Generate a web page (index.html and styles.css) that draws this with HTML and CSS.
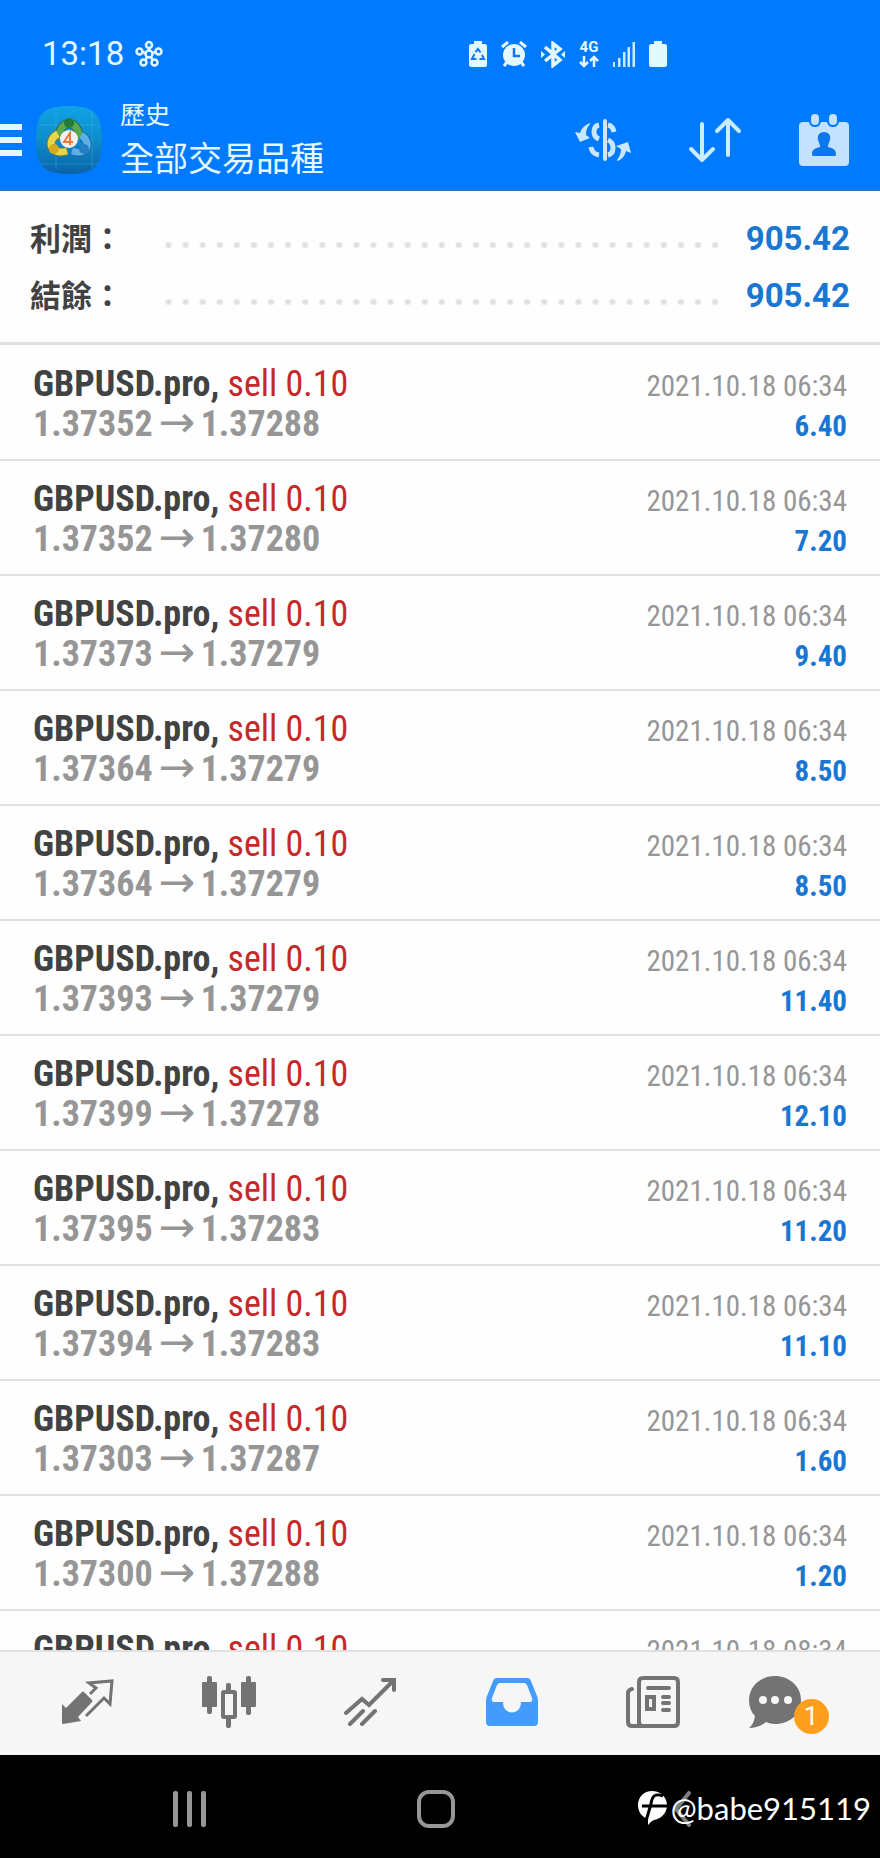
FILE: index.html
```html
<!DOCTYPE html>
<html lang="zh-Hant">
<head>
<meta charset="utf-8">
<meta name="viewport" content="width=device-width, initial-scale=1">
<title>歷史</title>
<link rel="stylesheet" href="styles.css">
</head>
<body>
<div class="app">
  <header class="header">
    <div class="status">
      <div class="status-left">
        <span class="clock">13:18</span>
        <svg class="icon" width="28" height="28" viewBox="0 0 28 28" fill="none" stroke="#e4f8ff" stroke-width="2.500"><circle cx="14" cy="14" r="3.5"/><circle cx="14" cy="5" r="3"/><circle cx="4.500" cy="11.500" r="3"/><circle cx="23.500" cy="11.500" r="3"/><circle cx="8.500" cy="22.500" r="3"/><circle cx="19.500" cy="22.500" r="3"/><path d="M14 8v3M7.500 12l3 1M20.500 12l-3 1M10.500 20l1.500-3M17.500 20L16 17"/></svg>
      </div>
      <div class="status-right">
        <svg class="icon" width="18" height="26" viewBox="0 0 18 26"><path fill="#e4f8ff" d="M5 0h8v3h3q2 0 2 2v19q0 2-2 2H2q-2 0-2-2V5q0-2 2-2h3z"/><path fill="none" stroke="#1478ee" stroke-width="2" d="M6.500 11L9 8l2.500 3.500M13 14l2 4h-4.500M7.500 18H3l2.500-5"/></svg>
        <svg class="icon" width="26" height="26" viewBox="0 0 26 26"><circle cx="13" cy="14" r="11" fill="#e4f8ff"/><path fill="none" stroke="#e4f8ff" stroke-width="3" d="M1 6l6-5M19 1l6 5M6 21l-3 4M20 21l3 4"/><path fill="none" stroke="#1478ee" stroke-width="2.500" d="M13 7v8h6"/></svg>
        <svg class="icon" width="24" height="27" viewBox="0 0 24 27"><path fill="none" stroke="#e4f8ff" stroke-width="3.500" d="M4 6l15 13-7 5.500v-22L19 8 4 20"/><path fill="#e4f8ff" d="M0 10l4 3.500L0 17zM24 10l-4 3.500 4 3.500z"/></svg>
        <span class="network">4G<svg class="icon" width="20" height="13" viewBox="0 0 20 13" fill="none" stroke="#e4f8ff" stroke-width="2.500"><path d="M5 1v10M1 7l4 4 4-4M15 12V2M11 6l4-4 4 4"/></svg></span>
        <svg class="icon" width="22" height="25" viewBox="0 0 22 25" fill="#c9ecff"><path d="M0 20h2v5H0zM5 16h2.500v9H5zM10 10h2.500v15H10zM14.500 5H17v20h-2.500zM19.500 0H22v25h-2.500z"/></svg>
        <svg class="icon" width="18" height="26" viewBox="0 0 18 26"><path fill="#e4f8ff" d="M5 0h8v3h3q2 0 2 2v19q0 2-2 2H2q-2 0-2-2V5q0-2 2-2h3z"/></svg>
      </div>
    </div>
    <div class="toolbar">
      <button class="plain" aria-label="選單"><svg class="icon" width="22" height="34" viewBox="0 0 22 34" fill="#e4f8ff"><path d="M0 1h22v6H0zM0 14h22v6H0zM0 27h22v6H0z"/></svg></button>
      <svg class="icon logo" width="66" height="68" viewBox="0 0 66 68">
        <defs>
          <linearGradient id="bg" x2="0" y2="1"><stop offset="0" stop-color="#10a3e6"/><stop offset=".5" stop-color="#0d8ccb"/><stop offset="1" stop-color="#0b62a8"/></linearGradient>
        </defs>
        <path fill="url(#bg)" d="M33 0C59 0 66 8 66 34S59 68 33 68 0 60 0 34 7 0 33 0z"/>
        <path fill="none" stroke="#55bde3" stroke-opacity=".35" d="M4 19h58M4 58h58M56 6v56M20 8v54"/>
        <path fill="none" stroke="#2d6d45" stroke-width="9" d="M23 34C22 12 44 12 43 34"/>
        <path fill="none" stroke="#5aa850" stroke-width="7" d="M23 34C22 12 44 12 43 34"/>
        <path fill="none" stroke="#6e7a3a" stroke-width="9" d="M22 28C10 34 14 50 31 45"/>
        <path fill="none" stroke="#e8d548" stroke-width="7" d="M22 28C10 34 14 50 31 45"/>
        <path fill="none" stroke="#20659f" stroke-width="9" d="M45 29C56 36 52 50 36 45"/>
        <path fill="none" stroke="#5cb0e6" stroke-width="7" d="M45 29C56 36 52 50 36 45"/>
        <circle cx="33" cy="17" r="5" fill="#237d38"/><circle cx="18" cy="43" r="5" fill="#d5a91f"/><circle cx="48" cy="43" r="5" fill="#2380c6"/>
        <circle cx="33" cy="33" r="9" fill="#f5f1ef"/>
        <path fill="none" stroke="#e77b3b" stroke-width="2" d="M34 39V27l-6 9h9"/>
      </svg>
      <div class="titles"><div class="subtitle">歷史</div><h1 class="title">全部交易品種</h1></div>
      <div class="actions">
        <button class="plain" aria-label="交易品種"><svg class="icon" width="56" height="44" viewBox="0 0 56 44" fill="none" stroke="#c9e8ff" stroke-width="5"><path stroke-width="4" stroke-linecap="round" d="M30 3v38"/><path d="M24 7q-5 1-5 7 0 5 5 7M33 7q5 1 6 7M16 29q1 7 8 8M33 22q5 2 5 8t-5 7"/><path fill="#c9e8ff" stroke="none" d="M15 5Q7 8 5 15l-5-1 5 10 10-4-4-3Q11 10 15 6zM42 43q7-2 9-10l5 2-3-11-12 4 5 3q0 6-4 11z"/></svg></button>
        <button class="plain" aria-label="排序"><svg class="icon" width="54" height="46" viewBox="0 0 54 46" fill="none" stroke="#c9ecff" stroke-width="4" stroke-linecap="round" stroke-linejoin="round"><path d="M14 7v36M3 32l11 11 11-11M40 38V3M29 14L40 3l11 11"/></svg></button>
        <button class="plain" aria-label="期間"><svg class="icon" width="50" height="52" viewBox="0 0 50 52"><path fill="#c4e1ff" d="M4 8h6q1 5 6 5t6-5h6q1 5 6 5t6-5h6q4 0 4 4v36q0 4-4 4H4q-4 0-4-4V12q0-4 4-4z"/><rect x="12" y="0" width="8" height="11" rx="4" fill="#c4e1ff"/><rect x="30" y="0" width="8" height="11" rx="4" fill="#c4e1ff"/><path fill="#0b78ea" d="M25 18c5 0 7 4 6 8-1 3-2 4-2 7 5 1 8 3 8 7 0 2-1 2-2 2H15c-1 0-2 0-2-2 0-4 3-6 8-7 0-3-1-4-2-7-1-4 1-8 6-8z"/></svg></button>
      </div>
    </div>
  </header>

  <dl class="summary">
    <div class="total"><dt>利潤：</dt><dd class="dots" aria-hidden="true"></dd><dd class="amount">905.42</dd></div>
    <div class="total"><dt>結餘：</dt><dd class="dots" aria-hidden="true"></dd><dd class="amount">905.42</dd></div>
  </dl>

  <main class="list-wrap">
    <ul class="deals">
      <li class="deal"><div class="name"><b>GBPUSD.pro,</b> sell 0.10</div><time class="date">2021.10.18 06:34</time><div class="prices">1.37352<span class="arrow">→</span>1.37288</div><div class="profit">6.40</div></li>
      <li class="deal"><div class="name"><b>GBPUSD.pro,</b> sell 0.10</div><time class="date">2021.10.18 06:34</time><div class="prices">1.37352<span class="arrow">→</span>1.37280</div><div class="profit">7.20</div></li>
      <li class="deal"><div class="name"><b>GBPUSD.pro,</b> sell 0.10</div><time class="date">2021.10.18 06:34</time><div class="prices">1.37373<span class="arrow">→</span>1.37279</div><div class="profit">9.40</div></li>
      <li class="deal"><div class="name"><b>GBPUSD.pro,</b> sell 0.10</div><time class="date">2021.10.18 06:34</time><div class="prices">1.37364<span class="arrow">→</span>1.37279</div><div class="profit">8.50</div></li>
      <li class="deal"><div class="name"><b>GBPUSD.pro,</b> sell 0.10</div><time class="date">2021.10.18 06:34</time><div class="prices">1.37364<span class="arrow">→</span>1.37279</div><div class="profit">8.50</div></li>
      <li class="deal"><div class="name"><b>GBPUSD.pro,</b> sell 0.10</div><time class="date">2021.10.18 06:34</time><div class="prices">1.37393<span class="arrow">→</span>1.37279</div><div class="profit">11.40</div></li>
      <li class="deal"><div class="name"><b>GBPUSD.pro,</b> sell 0.10</div><time class="date">2021.10.18 06:34</time><div class="prices">1.37399<span class="arrow">→</span>1.37278</div><div class="profit">12.10</div></li>
      <li class="deal"><div class="name"><b>GBPUSD.pro,</b> sell 0.10</div><time class="date">2021.10.18 06:34</time><div class="prices">1.37395<span class="arrow">→</span>1.37283</div><div class="profit">11.20</div></li>
      <li class="deal"><div class="name"><b>GBPUSD.pro,</b> sell 0.10</div><time class="date">2021.10.18 06:34</time><div class="prices">1.37394<span class="arrow">→</span>1.37283</div><div class="profit">11.10</div></li>
      <li class="deal"><div class="name"><b>GBPUSD.pro,</b> sell 0.10</div><time class="date">2021.10.18 06:34</time><div class="prices">1.37303<span class="arrow">→</span>1.37287</div><div class="profit">1.60</div></li>
      <li class="deal"><div class="name"><b>GBPUSD.pro,</b> sell 0.10</div><time class="date">2021.10.18 06:34</time><div class="prices">1.37300<span class="arrow">→</span>1.37288</div><div class="profit">1.20</div></li>
      <li class="deal"><div class="name"><b>GBPUSD.pro,</b> sell 0.10</div><time class="date">2021.10.18 08:34</time></li>
    </ul>
  </main>

  <nav class="tabs">
    <button class="plain" aria-label="報價"><svg class="icon" width="52" height="46" viewBox="0 0 52 46"><path fill="#737373" d="M0 25l4 4L20 13q1-1 2 0l8 8q1 1 0 2L16 38l3 4-18 3q-1 0-1-1z"/><path fill="none" stroke="#737373" stroke-width="3" d="M28 15l6-6-7-5 23-2-2 23-6-6-18 18"/></svg></button>
    <button class="plain" aria-label="圖表"><svg class="icon" width="54" height="52" viewBox="0 0 54 52" fill="#737373"><rect x="5" y="0" width="5" height="38" rx="2"/><rect x="0" y="6" width="15" height="25" rx="1"/><rect x="44" y="0" width="5" height="39" rx="2"/><rect x="39" y="6" width="15" height="25" rx="1"/><rect x="24" y="7" width="5" height="45" rx="2"/><rect x="21" y="16" width="12" height="25" rx="1" fill="#f6f6f6" stroke="#737373" stroke-width="4"/></svg></button>
    <button class="plain" aria-label="交易"><svg class="icon" width="52" height="48" viewBox="0 0 52 48" fill="none" stroke="#737373" stroke-width="4" stroke-linecap="round"><path d="M2 35l16-14 7 6L48 4M39 2h11v10M6 46l13-13M18 46l13-13"/></svg></button>
    <button class="plain" aria-label="歷史"><svg class="icon" width="52" height="48" viewBox="0 0 52 48"><path fill="#439cfb" fill-rule="evenodd" d="M11 0h30q3 0 4 3l6 15q1 2 1 5v21q0 4-4 4H4q-4 0-4-4V23q0-3 1-5L7 3q1-3 4-3zm3 5q-2 0-3 2L6 20q-1 4 2 4h9c0 14 18 14 18 0h9q3 0 2-4L41 7q-1-2-3-2z"/></svg></button>
    <button class="plain" aria-label="新聞"><svg class="icon" width="54" height="52" viewBox="0 0 54 52" fill="none" stroke="#737373" stroke-width="4" stroke-linecap="round"><path d="M13 46V6q0-4 4-4h31q4 0 4 4v40q0 4-4 4H6q-4 0-4-4V17q0-3 4-4M13 46q0 3 3 4M22 12h21M37 21h6M37 27h6M37 34h6M21 21h7v12h-7z"/></svg></button>
    <button class="plain chat" aria-label="訊息"><svg class="icon" width="52" height="52" viewBox="0 0 52 52"><path fill="#737373" d="M26 0c14 0 26 10 26 24S41 48 26 48q-5 0-9-2-7 6-17 6 5-4 6-12Q0 34 0 24C0 10 12 0 26 0z"/><g fill="#f6f6f6"><circle cx="14" cy="24" r="4"/><circle cx="26" cy="24" r="4"/><circle cx="39" cy="24" r="4"/></g></svg><span class="badge">1</span></button>
  </nav>

  <footer class="system">
    <button class="plain" aria-label="最近"><svg class="icon" width="34" height="36" viewBox="0 0 34 36" fill="#969696"><rect width="5" height="36" rx="2"/><rect x="14" width="5" height="36" rx="2"/><rect x="28" width="5" height="36" rx="2"/></svg></button>
    <button class="plain" aria-label="主畫面"><svg class="icon" width="38" height="38" viewBox="0 0 38 38" fill="none" stroke="#969696" stroke-width="4"><rect x="2" y="2" width="34" height="34" rx="10"/></svg></button>
    <button class="plain" aria-label="返回"><svg class="icon" width="18" height="36" viewBox="0 0 18 36" fill="none" stroke="#808080" stroke-width="4" stroke-linecap="round"><path d="M16 2L3 18l13 16"/></svg></button>
    <div class="watermark"><svg class="icon" width="29" height="34" viewBox="0 0 29 34"><path fill="#fff" d="M14 0c8 0 15 6 15 14 0 9-7 14-13 15q-3 1-6 5V28C4 26 0 21 0 14 0 6 6 0 14 0z"/><path fill="none" stroke="#000" stroke-width="3" d="M25 5c-8-3-11 0-12 8L8 30M4 15h25"/></svg><span>@babe915119</span></div>
  </footer>
</div>
</body>
</html>
```
FILE: styles.css
```css
* {
  box-sizing: border-box;
}

body {
  margin: 0;
  background: #fefefe;
  color: #424242;
  font-family: Roboto, "Noto Sans CJK TC", sans-serif;
}

.app {
  display: flex;
  flex-direction: column;
  height: 100vh;
  overflow: hidden;
}

.icon {
  display: block;
  flex: none;
}

.plain {
  display: flex;
  align-items: center;
  justify-content: center;
  margin: 0;
  padding: 0;
  border: 0;
  background: none;
  font: inherit;
}

/* Header */
.header {
  flex: none;
  padding-bottom: 11px;
  border-bottom: 1px solid #3a78b8;
  background: #007aff;
  color: #e4f8ff;
}

.status {
  display: grid;
  grid-template-columns: 469fr 411fr;
  align-items: center;
  padding-top: 32px;
}

.status-left,
.status-right {
  display: flex;
  align-items: center;
  height: 44px;
}

.status-left {
  gap: 11px;
  padding-left: 42px;
}

.status-right {
  gap: 14px;
}

.clock {
  font-size: 33px;
  line-height: 46px;
}

.network {
  display: flex;
  flex-direction: column;
  align-items: center;
  gap: 1px;
  width: 20px;
  font-size: 15px;
  font-weight: 700;
  line-height: 14px;
}

.toolbar {
  display: flex;
  align-items: center;
  height: 103px;
  padding: 24px 31px 0 0;
}

.logo {
  margin-left: 14px;
}

.titles {
  margin-left: 18px;
  font-family: "Noto Sans CJK TC", sans-serif;
}

.subtitle {
  font-size: 25px;
  line-height: 35px;
}

.title {
  margin: 0;
  font-size: 34px;
  font-weight: 400;
  line-height: 52px;
}

.actions {
  display: flex;
  align-items: center;
  gap: 57px;
  margin-left: auto;
}

/* Totals */
.summary {
  flex: none;
  margin: 0;
  padding: 18px 30px 19px;
  border-bottom: 3px solid #e2e2e2;
}

.total {
  display: flex;
  align-items: center;
  height: 57px;
}

.total dt {
  width: 130px;
  padding-bottom: 2px;
  font-family: "Noto Sans CJK TC", sans-serif;
  font-size: 31px;
  font-weight: 700;
  line-height: 44px;
}

.total dd {
  margin: 0;
}

.total .dots {
  flex: 1;
  height: 6px;
  margin-top: 14px;
  background: radial-gradient(circle, #e0e0e0 2px, transparent 4px) 0 0 / 17px 6px round;
}

.total .amount {
  width: 126px;
  padding-top: 2px;
  color: #1976d2;
  font-size: 33px;
  font-weight: 700;
  text-align: right;
}

/* Deals */
.list-wrap {
  flex: 1;
  min-height: 0;
  overflow: hidden;
}

.deals {
  margin: 0;
  padding: 1px 0 0;
  list-style: none;
}

.deal {
  display: grid;
  grid-template-columns: 1fr auto;
  grid-auto-rows: 40px;
  height: 115px;
  padding: 18px 33px 0;
  border-bottom: 2px solid #e2e2e2;
  font-family: "Roboto Condensed", "Liberation Sans Narrow", Roboto, sans-serif;
  line-height: 40px;
  white-space: nowrap;
}

.name {
  color: #c62828;
  font-size: 36px;
}

.name b {
  color: #424242;
}

.date {
  color: #969696;
  font-size: 29px;
  line-height: 44px;
}

.prices {
  display: flex;
  color: #969696;
  font-size: 36px;
  font-weight: 700;
}

.arrow {
  width: 48px;
  font-family: "DejaVu Sans", sans-serif;
  font-size: 44px;
  font-weight: 400;
  line-height: 36px;
  text-align: center;
}

.profit {
  color: #1976d2;
  font-size: 29px;
  font-weight: 700;
  line-height: 44px;
  text-align: right;
}

/* Tab bar */
.tabs {
  display: grid;
  flex: none;
  grid-template-columns: repeat(6, 1fr);
  height: 105px;
  padding: 0 15px 4px 17px;
  border-top: 2px solid #e0e0e0;
  background: #f6f6f6;
}

.chat {
  position: relative;
  justify-content: flex-start;
  padding-left: 25px;
}

.badge {
  position: absolute;
  top: 47px;
  left: 70px;
  width: 35px;
  height: 35px;
  border-radius: 50%;
  background: #ff9f1c;
  color: #fff;
  font-size: 26px;
  line-height: 35px;
  text-align: center;
}

/* System bar */
.system {
  position: relative;
  display: grid;
  flex: none;
  grid-template-columns: repeat(3, 1fr);
  height: 103px;
  padding: 4px 75px 0 67px;
  background: #000;
}

.watermark {
  position: absolute;
  right: 9px;
  bottom: 28px;
  display: flex;
  align-items: center;
  gap: 4px;
  color: #fff;
  font-family: Lato, sans-serif;
  font-size: 31px;
  line-height: 44px;
}
```
